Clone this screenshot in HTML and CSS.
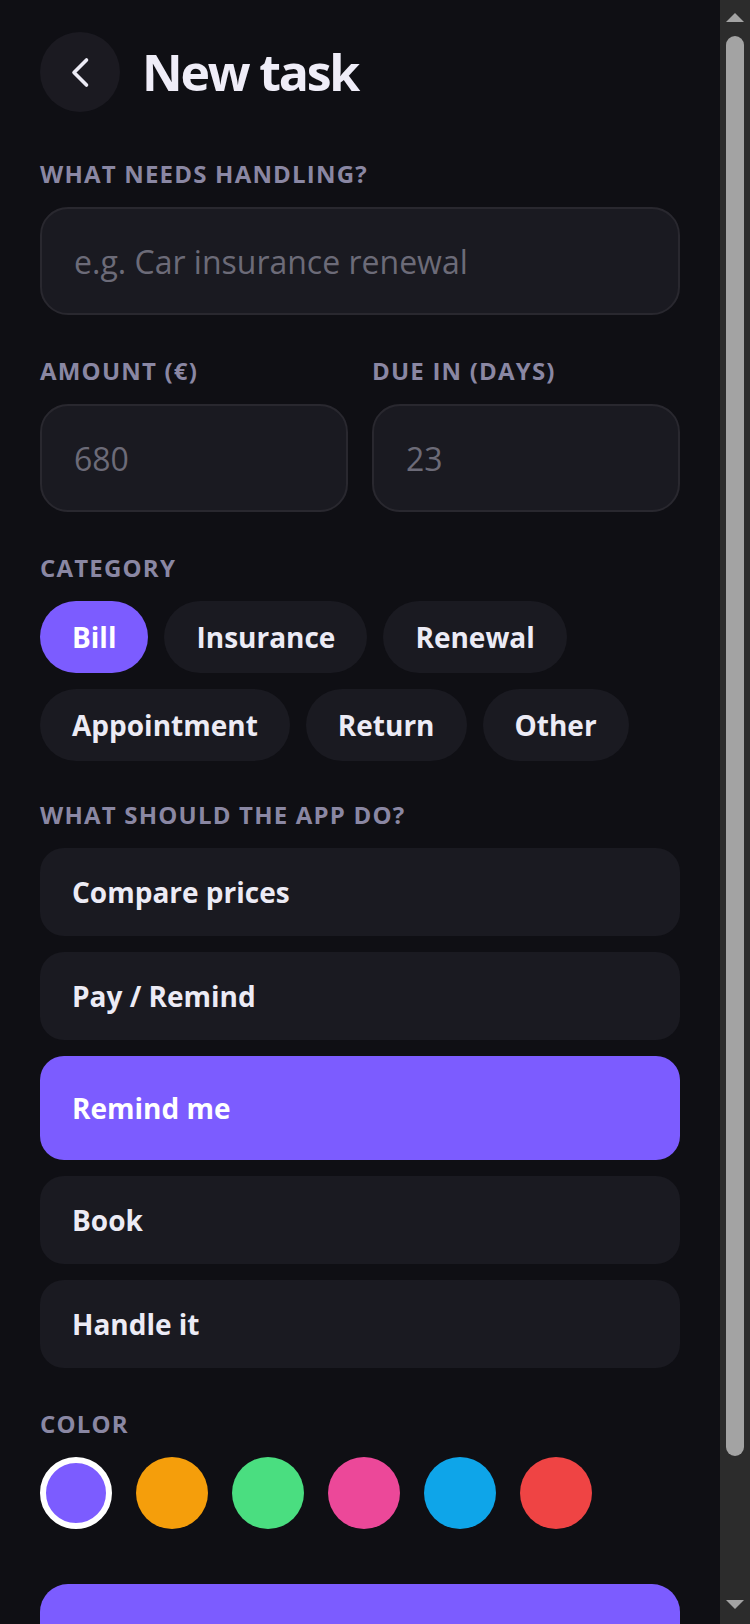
FILE: index.html
```html
<!DOCTYPE html>
<html lang="en">
<head>
<meta charset="utf-8">
<meta name="viewport" content="width=device-width, initial-scale=1">
<title>New task</title>
<link rel="stylesheet" href="styles.css">
</head>
<body>
<div class="app">
<div class="screen">
  <header class="header">
    <button class="back" aria-label="Back">
      <svg width="80" height="80" viewBox="0 0 80 80"><path d="M46.5 28 L34 40.5 L46.5 53" fill="none" stroke="#ecebf5" stroke-width="3.6" stroke-linecap="round" stroke-linejoin="round"/></svg>
    </button>
    <h1 class="title">New task</h1>
  </header>

  <section class="field">
    <div class="label">What needs handling?</div>
    <div class="input"><span class="ph">e.g. Car insurance renewal</span></div>
  </section>

  <section class="field row2">
    <div class="col">
      <div class="label">Amount (€)</div>
      <div class="input"><span class="ph">680</span></div>
    </div>
    <div class="col">
      <div class="label">Due in (days)</div>
      <div class="input"><span class="ph">23</span></div>
    </div>
  </section>

  <section class="field cats">
    <div class="label">Category</div>
    <div class="chips">
      <span class="chip on">Bill</span>
      <span class="chip">Insurance</span>
      <span class="chip">Renewal</span>
      <span class="chip">Appointment</span>
      <span class="chip">Return</span>
      <span class="chip">Other</span>
    </div>
  </section>

  <section class="field">
    <div class="label">What should the app do?</div>
    <div class="options">
      <div class="option">Compare prices</div>
      <div class="option">Pay / Remind</div>
      <div class="option on">Remind me</div>
      <div class="option">Book</div>
      <div class="option">Handle it</div>
    </div>
  </section>

  <section class="field last">
    <div class="label">Color</div>
    <div class="swatches">
      <span class="swatch sel c1"></span>
      <span class="swatch c2"></span>
      <span class="swatch c3"></span>
      <span class="swatch c4"></span>
      <span class="swatch c5"></span>
      <span class="swatch c6"></span>
    </div>
  </section>

  <button class="submit" aria-label="Create task"></button>
</div>
</div>
<div class="scrollbar" aria-hidden="true">
  <div class="sb-btn sb-up"><span class="tri-up"></span></div>
  <div class="sb-thumb"></div>
  <div class="sb-track"></div>
  <div class="sb-btn sb-down"><span class="tri-down"></span></div>
</div>
</body>
</html>
```

FILE: styles.css
```css
* { box-sizing: border-box; }
html, body {
  margin: 0;
  padding: 0;
  height: 100%;
  overflow: hidden;
  background: #0f0f14;
}
body {
  display: flex;
  height: 100vh;
  font-family: "Open Sans", "Noto Sans", sans-serif;
  color: #ecebf5;
}
.app {
  flex: 1;
  min-width: 0;
  height: 100vh;
  overflow: hidden;
  background: #0f0f14;
}

/* scrollbar column */
.scrollbar {
  width: 30px;
  flex: none;
  height: 100vh;
  background: #2c2c2c;
  display: flex;
  flex-direction: column;
  align-items: center;
}
.sb-btn {
  height: 30px;
  width: 30px;
  flex: none;
  display: flex;
  justify-content: center;
}
.sb-up { align-items: flex-start; padding-top: 13px; }
.sb-down { align-items: flex-start; padding-top: 6px; }
.tri-up {
  width: 0;
  height: 0;
  border-left: 9px solid transparent;
  border-right: 9px solid transparent;
  border-bottom: 9px solid #a3a3a3;
}
.tri-down {
  width: 0;
  height: 0;
  border-left: 9px solid transparent;
  border-right: 9px solid transparent;
  border-top: 9px solid #a3a3a3;
}
.sb-thumb {
  width: 18px;
  height: 1420px;
  margin-top: 6px;
  border-radius: 9px;
  background: #a3a3a3;
  flex: none;
}
.sb-track { flex: 1; }

.screen {
  padding: 32px 40px 78px;
  display: flex;
  flex-direction: column;
}
.header {
  display: flex;
  align-items: center;
  gap: 22px;
  margin-bottom: 44px;
}
.back {
  width: 80px;
  height: 80px;
  flex: none;
  border-radius: 50%;
  border: none;
  background: #1b1a21;
  display: flex;
  align-items: center;
  justify-content: center;
  padding: 0;
}
.back svg { display: block; }
.title {
  margin: 0;
  font-size: 50px;
  font-weight: 700;
  line-height: 1.2;
  letter-spacing: -2.2px;
  color: #efedf8;
}
.field { margin-bottom: 38px; }
.field.cats { margin-bottom: 36px; }
.field.last { margin-bottom: 55px; }
.label {
  font-size: 24px;
  line-height: 36px;
  font-weight: 700;
  text-transform: uppercase;
  letter-spacing: 1.2px;
  color: #8a87a3;
  margin-bottom: 15px;
}
.input {
  height: 108px;
  border: 2px solid #29282f;
  background: #1a1a21;
  border-radius: 28px;
  padding: 0 32px;
  display: flex;
  align-items: center;
  font-size: 32px;
}
.ph { color: #6c6b78; }
.row2 {
  display: grid;
  grid-template-columns: 1fr 1fr;
  gap: 24px;
}
.chips {
  display: flex;
  flex-wrap: wrap;
  gap: 16px;
}
.chip {
  height: 72px;
  padding: 0 32px;
  border-radius: 36px;
  background: #1a1a21;
  font-size: 28px;
  font-weight: 700;
  display: flex;
  align-items: center;
  color: #ecebf5;
}
.chip.on { background: #7c5cff; color: #ffffff; }
.options {
  display: flex;
  flex-direction: column;
  gap: 16px;
}
.option {
  height: 88px;
  padding: 0 32px;
  border-radius: 24px;
  background: #1a1a21;
  font-size: 28px;
  font-weight: 700;
  display: flex;
  align-items: center;
}
.option.on {
  height: 104px;
  background: #7c5cff;
  color: #ffffff;
}
.swatches {
  display: flex;
  gap: 24px;
}
.swatch {
  width: 72px;
  height: 72px;
  border-radius: 50%;
  display: block;
}
.swatch.sel { border: 6px solid #ffffff; }
.c1 { background: #7c5cff; }
.c2 { background: #f59e0b; }
.c3 { background: #4ade80; }
.c4 { background: #ec4899; }
.c5 { background: #0ea5e9; }
.c6 { background: #ef4444; }
.submit {
  height: 112px;
  border: none;
  border-radius: 28px;
  background: #7c5cff;
  padding: 0;
}
```
